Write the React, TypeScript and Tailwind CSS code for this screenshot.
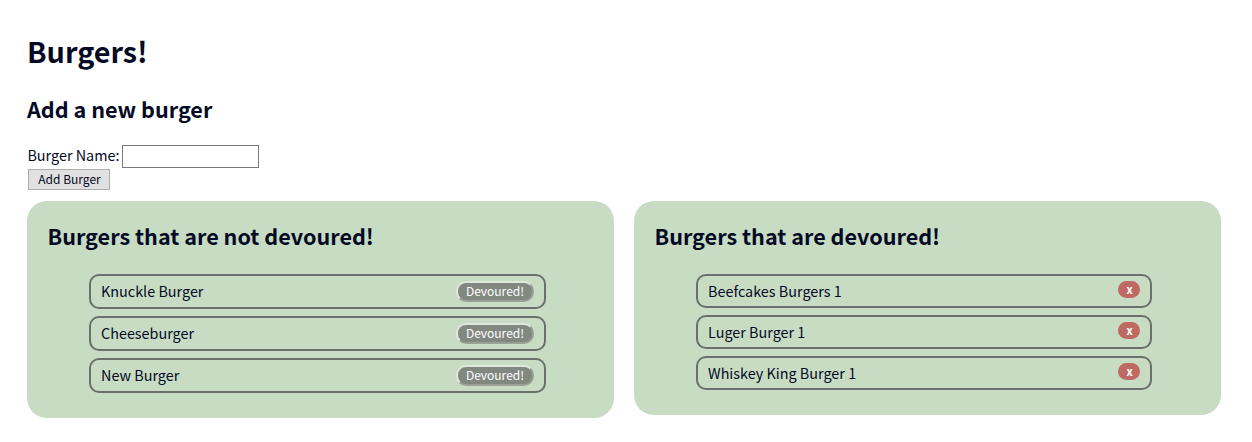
import { ReactNode } from "react";

const waiting = ["Knuckle Burger", "Cheeseburger", "New Burger"];
const devoured = ["Beefcakes Burgers 1", "Luger Burger 1", "Whiskey King Burger 1"];

function Panel({ title, height, children }: { title: string; height: string; children: ReactNode }) {
  return (
    <section className={`${height} w-[587px] rounded-[20px] bg-[#c8dcc4] pt-[19px] pl-[20.5px]`}>
      <h2 className="h-[32px] whitespace-nowrap text-[21.6px] leading-[32px] font-bold">{title}</h2>
      <ul className="mt-[22px] ml-[41.5px] flex flex-col gap-[7px]">{children}</ul>
    </section>
  );
}

export default function App() {
  return (
    <main className="h-[442px] overflow-hidden bg-white pt-[30px] pl-[27px] font-['Noto_Sans_CJK_SC',sans-serif] text-[#050a24]">
      <h1 className="h-[42px] text-[28.8px] leading-[42px] font-bold">Burgers!</h1>
      <h2 className="mt-[21px] h-[32px] text-[21.6px] leading-[32px] font-bold">Add a new burger</h2>
      <form className="mt-[20px]" onSubmit={(e) => e.preventDefault()}>
        <div className="flex h-[23px]">
          <label htmlFor="burger" className="w-[95px] whitespace-nowrap pl-[0.4px] text-[14.4px] leading-[19px]">
            Burger Name:
          </label>
          <input id="burger" type="text" className="h-[23px] w-[137px] border border-[#7a7a7a] bg-white px-1 outline-none" />
        </div>
        <button className="mt-[1px] ml-[1px] flex h-[21px] w-[82px] items-start justify-center border border-[#adadad] bg-[#e1e1e1] pl-[1px] text-[12px] leading-[17px] whitespace-nowrap">
          Add Burger
        </button>
      </form>
      <div className="mt-[11px] flex items-start gap-[20px]">
        <Panel title="Burgers that are not devoured!" height="h-[217px]">
          {waiting.map((name) => (
            <li key={name} className="flex h-[35px] w-[457px] justify-between rounded-[10px] border-2 border-[#697069] pt-[5px] pr-[10px] pl-[10px]">
              <span className="text-[14.4px] leading-[19px]">{name}</span>
              <button className="flex h-[21px] w-[78px] items-start justify-center rounded-[10px] border-2 border-t-[#dfe8dd] border-r-[#99a197] border-b-[#99a197] border-l-[#dfe8dd] bg-[#808880] text-[12px] leading-[15px] whitespace-nowrap text-white">
                Devoured!
              </button>
            </li>
          ))}
        </Panel>
        <Panel title="Burgers that are devoured!" height="h-[214px]">
          {devoured.map((name) => (
            <li key={name} className="flex h-[34px] w-[456px] justify-between rounded-[10px] border-2 border-[#697069] pt-[5px] pr-[10px] pl-[10px]">
              <span className="text-[14.4px] leading-[19px]">{name}</span>
              <button className="h-[17px] w-[22px] rounded-[9px] bg-[#be6a62] pl-[1px] text-center text-[11px] leading-[17px] font-bold text-white">
                x
              </button>
            </li>
          ))}
        </Panel>
      </div>
    </main>
  );
}
